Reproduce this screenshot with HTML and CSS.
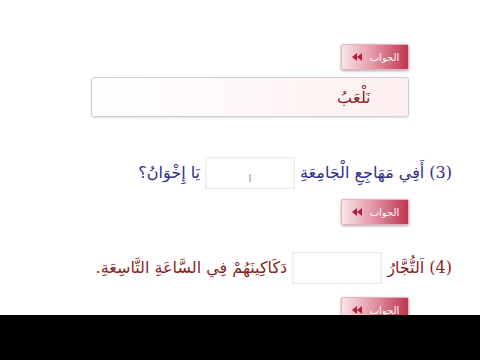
FILE: index.html
```html
<!DOCTYPE html>
<html lang="ar" dir="rtl">
<head>
<meta charset="utf-8">
<title>تمارين</title>
<link rel="stylesheet" href="styles.css">
</head>
<body>
<!--Exercise sheet-->
<div class="sheet">
	<div class="answer-btn"><span class="label">الجواب</span><svg class="arrows" viewBox="0 0 12 8" width="12" height="8"><path d="M6 0L1 4L6 8Z M11 0L6 4L11 8Z"/></svg></div>
	<div class="answer-box"><span>نَلْعَبُ</span></div>

	<div class="question q-blue">
		<span>(3) أَفِي مَهَاجِعِ الْجَامِعَةِ</span>
		<div class="blank"><span class="caret">I</span></div>
		<span>يَا إِخْوَانُ؟</span>
	</div>
	<div class="answer-btn gap-s"><span class="label">الجواب</span><svg class="arrows" viewBox="0 0 12 8" width="12" height="8"><path d="M6 0L1 4L6 8Z M11 0L6 4L11 8Z"/></svg></div>

	<div class="question q-red">
		<span>(4) اَلتُّجَّارُ</span>
		<div class="blank"></div>
		<span>دَكَاكِينَهُمْ فِي السَّاعَةِ التَّاسِعَةِ.</span>
	</div>
	<div class="answer-btn gap-m"><span class="label">الجواب</span><svg class="arrows" viewBox="0 0 12 8" width="12" height="8"><path d="M6 0L1 4L6 8Z M11 0L6 4L11 8Z"/></svg></div>
</div>
<!--Player bar-->
<div class="player-bar"></div>
</body>
</html>
```

FILE: styles.css
```css
/*Basic body design*/
body {
	font-family: "DejaVu Serif", "DejaVu Sans", serif;
	background: #fff;
	margin: 0;
}

/*Sheet area*/
div.sheet {
	box-sizing: border-box;
	padding: 44px 28px 0 0;
	flex-direction: column;
	align-items: flex-start;
	overflow: hidden;
	display: flex;
	height: 315px;
}

div.sheet > div {
	flex-shrink: 0;
}

/*Answer button*/
div.answer-btn {
	background: linear-gradient(to right, #f9e3e7, #e59aa9 45%, #bf3550);
	box-shadow: 0 1px 3px rgba(0, 0, 0, 0.35);
	border: 1px solid #e3b4bd;
	justify-content: center;
	align-items: center;
	margin-right: 43px;
	border-radius: 2px;
	display: flex;
	height: 24px;
	width: 66px;
	gap: 7px;
}

div.answer-btn .label {
	font-family: "DejaVu Sans", sans-serif;
	font-size: 10px;
	color: #fff;
}

div.answer-btn .arrows {
	fill: #b01e3a;
}

div.gap-s {
	margin-top: 11px;
}

div.gap-m {
	margin-top: 14px;
}

/*Answer box*/
div.answer-box {
	background: linear-gradient(to right, #fff, #fdeff0);
	border: 1px solid #cfcfcf;
	box-shadow: 0 1px 2px #ddd;
	margin: 7px 43px 0 0;
	align-items: center;
	border-radius: 3px;
	padding-right: 38px;
	display: flex;
	height: 38px;
	width: 278px;
}

div.answer-box span {
	color: #8e1a24;
	font-weight: 300;
	font-size: 16px;
}

/*Question line*/
div.question {
	align-items: center;
	line-height: 31px;
	font-size: 16px;
	display: flex;
	height: 31px;
	gap: 5px;
}

div.q-blue {
	margin-top: 40px;
	color: #2f2f86;
}

div.q-red {
	margin-top: 27px;
	color: #8a1f1f;
}

/*Blank to fill*/
div.blank {
	box-shadow: inset 0 0 2px #e6e6e6;
	border: 1px solid #ececec;
	justify-content: center;
	background: #fff;
	display: flex;
	height: 30px;
	width: 88px;
}

/*Mouse caret inside the blank*/
div.blank .caret {
	font-family: "DejaVu Sans", sans-serif;
	padding-top: 5px;
	font-size: 10px;
	color: #999;
}

/*Player bar*/
div.player-bar {
	background: #000;
	height: 45px;
}
```
